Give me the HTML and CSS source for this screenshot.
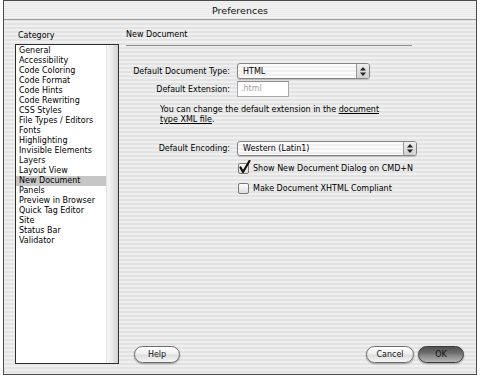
FILE: index.html
```html
<!DOCTYPE html>
<html>
<head>
<meta charset="utf-8">
<link rel="stylesheet" href="styles.css">
</head>
<body>
<div class="window">
  <div class="titlebar">Preferences</div>
  <div class="content">
    <div class="sidebar">
      <div class="cat-label">Category</div>
      <div class="listbox">
        <ul class="items">
          <li>General</li>
          <li>Accessibility</li>
          <li>Code Coloring</li>
          <li>Code Format</li>
          <li>Code Hints</li>
          <li>Code Rewriting</li>
          <li>CSS Styles</li>
          <li>File Types / Editors</li>
          <li>Fonts</li>
          <li>Highlighting</li>
          <li>Invisible Elements</li>
          <li>Layers</li>
          <li>Layout View</li>
          <li class="sel">New Document</li>
          <li>Panels</li>
          <li>Preview in Browser</li>
          <li>Quick Tag Editor</li>
          <li>Site</li>
          <li>Status Bar</li>
          <li>Validator</li>
        </ul>
        <div class="scrolltrack"></div>
      </div>
    </div>
    <div class="main">
      <div class="heading">New Document</div>
      <div class="rule"></div>
      <div class="row row-type">
        <span class="lbl">Default Document Type:</span>
        <div class="popup popup-type">
          <span class="ptext">HTML</span>
          <span class="arrows"><svg width="6" height="9" viewBox="0 0 6 9"><path d="M3 0 L6 3.5 H0 Z M3 9 L6 5.5 H0 Z" fill="#222"/></svg></span>
        </div>
      </div>
      <div class="row row-ext">
        <span class="lbl">Default Extension:</span>
        <div class="input">.html</div>
      </div>
      <p class="note">You can change the default extension in the <span class="link">document <br>type XML file</span>.</p>
      <div class="row row-enc">
        <span class="lbl">Default Encoding:</span>
        <div class="popup popup-enc">
          <span class="ptext">Western (Latin1)</span>
          <span class="arrows"><svg width="6" height="9" viewBox="0 0 6 9"><path d="M3 0 L6 3.5 H0 Z M3 9 L6 5.5 H0 Z" fill="#222"/></svg></span>
        </div>
      </div>
      <div class="row check-row check-1">
        <span class="lbl"></span>
        <span class="checkbox"><svg class="tick" width="14" height="15" viewBox="0 0 14 15"><path d="M2.5 7.5 L5 12 L11.5 1" fill="none" stroke="#111" stroke-width="2.2" stroke-linecap="round" stroke-linejoin="round"/></svg></span>
        <span class="ctext">Show New Document Dialog on CMD+N</span>
      </div>
      <div class="row check-row check-2">
        <span class="lbl"></span>
        <span class="checkbox"></span>
        <span class="ctext">Make Document XHTML Compliant</span>
      </div>
      <div class="buttons">
        <button class="btn btn-help">Help</button>
        <button class="btn btn-cancel">Cancel</button>
        <button class="btn btn-ok">OK</button>
      </div>
    </div>
  </div>
</div>
</body>
</html>
```
FILE: styles.css
```css
html, body {
  margin: 0;
  padding: 0;
  background: #fff;
}
body {
  font-family: "DejaVu Sans", "Noto Sans", sans-serif;
  font-size: 8px;
  color: #000;
}
.window {
  margin-left: 3px;
  width: 474px;
  height: 375px;
  box-sizing: border-box;
  border: 1px solid #4a4a4a;
  display: flex;
  flex-direction: column;
  background: repeating-linear-gradient(to bottom, #efefef 0 2px, #e3e3e3 2px 4px);
}
.titlebar {
  height: 17px;
  padding-top: 1px;
  line-height: 17px;
  text-align: center;
  font-size: 9.5px;
  color: #111;
  border-bottom: 1px solid #9a9a9a;
  background: repeating-linear-gradient(to bottom, #f3f3f3 0 1px, #e9e9e9 1px 2px);
}
.content {
  flex: 1;
  display: flex;
  min-height: 0;
}
.sidebar {
  display: flex;
  flex-direction: column;
  padding: 10px 0 10px 11px;
}
.cat-label {
  height: 12px;
  line-height: 12px;
  padding-left: 3px;
  margin-bottom: 2px;
}
.listbox {
  width: 104px;
  height: 320px;
  box-sizing: border-box;
  border: 1px solid #2e2e2e;
  background: #fff;
  display: flex;
}
.items {
  list-style: none;
  margin: 0;
  padding: 1px 0 0;
  flex: 1;
  min-width: 0;
}
.items li {
  height: 10px;
  line-height: 10px;
  padding-left: 3px;
  white-space: nowrap;
}
.items li.sel {
  background: #c6c6c6;
}
.scrolltrack {
  width: 11px;
  background: linear-gradient(to right, #f8f8f8 0, #ececec 40%, #d2d2d2 100%);
  border-left: 1px solid #e2e2e2;
}
.main {
  flex: 1;
  display: flex;
  flex-direction: column;
  padding: 9px 12px 11px 7px;
}
.heading {
  height: 12px;
  line-height: 12px;
}
.rule {
  width: 286px;
  height: 1px;
  margin-top: 4px;
  background: #8c8c8c;
}
.row {
  display: flex;
  align-items: center;
}
.lbl {
  width: 104px;
  margin-right: 7px;
  text-align: right;
  flex: none;
}
.row-type { margin-top: 17px; height: 16px; }
.row-ext { margin-top: 2px; height: 16px; }
.row-enc { margin-top: 16px; height: 15px; }
.popup {
  box-sizing: border-box;
  height: 100%;
  border: 1px solid #858585;
  border-radius: 3px;
  background: repeating-linear-gradient(to bottom, #fcfcfc 0 2px, #f0f0f0 2px 4px);
  box-shadow: 0 1px 1px rgba(0, 0, 0, 0.18);
  display: flex;
  align-items: center;
  padding-left: 5px;
}
.popup-type { width: 133px; }
.popup-enc { width: 180px; }
.ptext {
  flex: 1;
  white-space: nowrap;
}
.arrows {
  width: 13px;
  height: 100%;
  box-sizing: border-box;
  border-left: 1px solid #9a9a9a;
  border-radius: 0 2px 2px 0;
  background: linear-gradient(to bottom, #eeeeee, #cfcfcf);
  display: flex;
  align-items: center;
  justify-content: center;
}
.input {
  box-sizing: border-box;
  width: 52px;
  height: 16px;
  border: 1px solid #a8a8a8;
  border-top-color: #8a8a8a;
  background: #fff;
  color: #a0a0a0;
  padding-left: 3px;
  line-height: 14px;
}
.note {
  margin: 8px 0 0;
  padding-left: 34px;
  line-height: 10px;
}
.link {
  text-decoration: underline;
}
.check-1 { margin-top: 7px; height: 11px; }
.check-2 { margin-top: 9px; height: 11px; }
.check-row .lbl { margin-right: 8px; }
.checkbox {
  position: relative;
  flex: none;
  box-sizing: border-box;
  width: 11px;
  height: 11px;
  border: 1px solid #7a7a7a;
  border-radius: 2px;
  background: linear-gradient(to bottom, #ffffff, #dcdcdc);
}
.tick {
  position: absolute;
  left: -1px;
  top: -4px;
}
.ctext {
  margin-left: 4px;
  white-space: nowrap;
}
.buttons {
  margin-top: auto;
  display: flex;
  align-items: center;
  height: 17px;
}
.btn {
  font-family: inherit;
  font-size: 8px;
  color: #111;
  height: 17px;
  padding: 0;
  border: 1px solid #6c6c6c;
  border-radius: 9px;
  background: linear-gradient(to bottom, #ffffff 0, #f0f0f0 45%, #dedede 55%, #f6f6f6 100%);
  box-shadow: 0 1px 2px rgba(0, 0, 0, 0.35);
}
.btn-help { width: 46px; margin-left: 8px; }
.btn-cancel { width: 48px; margin-left: auto; }
.btn-ok {
  width: 46px;
  margin-left: 4px;
  border-color: #3c3c3c;
  background: linear-gradient(to bottom, #505050 0, #6e6e6e 40%, #8a8a8a 60%, #b4b4b4 100%);
}
```
